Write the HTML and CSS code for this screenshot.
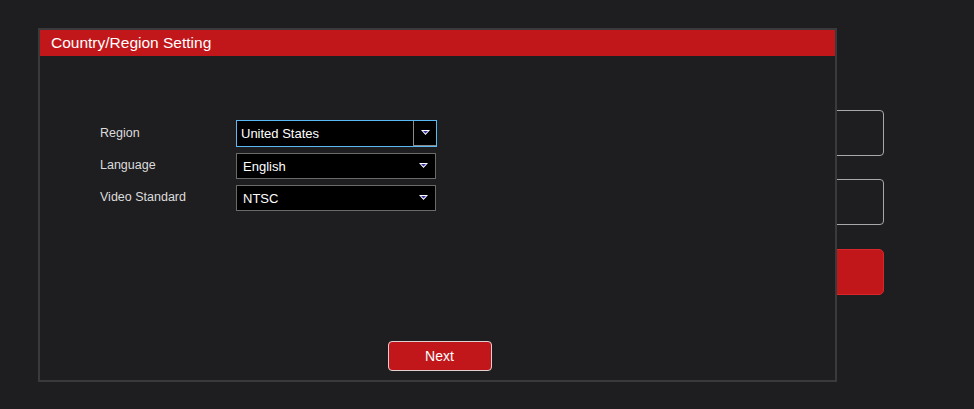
FILE: index.html
```html
<!DOCTYPE html>
<html lang="en">
<head>
    <meta charset="UTF-8">
    <meta name="viewport" content="width=device-width, initial-scale=1.0">
    <title>Country/Region Setting</title>
    <link rel="stylesheet" href="styles.css">
</head>
<body>
    <!-- login form underneath the wizard -->
    <div class="login">
        <div class="login-field"></div>
        <div class="login-field"></div>
        <div class="login-btn"></div>
    </div>

    <div class="dialog">
        <div class="dialog-title">Country/Region Setting</div>
        <div class="dialog-body">
            <div class="form">
                <div class="row">
                    <label>Region</label>
                    <div class="select focused">
                        <span class="value">United States</span>
                        <span class="arrow">
                            <svg width="9" height="6" viewBox="0 0 9 6"><polygon points="0,0 9,0 4.5,5" fill="#fff"/><polygon points="2,1 7,1 4.5,3.4" fill="#3535a8"/></svg>
                        </span>
                    </div>
                </div>
                <div class="row">
                    <label>Language</label>
                    <div class="select">
                        <span class="value">English</span>
                        <span class="arrow">
                            <svg width="9" height="6" viewBox="0 0 9 6"><polygon points="0,0 9,0 4.5,5" fill="#fff"/><polygon points="2,1 7,1 4.5,3.4" fill="#3535a8"/></svg>
                        </span>
                    </div>
                </div>
                <div class="row">
                    <label>Video Standard</label>
                    <div class="select">
                        <span class="value">NTSC</span>
                        <span class="arrow">
                            <svg width="9" height="6" viewBox="0 0 9 6"><polygon points="0,0 9,0 4.5,5" fill="#fff"/><polygon points="2,1 7,1 4.5,3.4" fill="#3535a8"/></svg>
                        </span>
                    </div>
                </div>
            </div>
            <div class="actions">
                <button class="next">Next</button>
            </div>
        </div>
    </div>
</body>
</html>
```

FILE: styles.css
```css
body {
    margin: 0;
    background: #1e1e20;
    font-family: "Liberation Sans", Arial, sans-serif;
    height: 409px;
    overflow: hidden;
}
.login {
    width: 344px;
    margin-left: 540px;
    padding-top: 110px;
    display: flex;
    flex-direction: column;
    gap: 23px;
}
.login-field {
    height: 44px;
    border: 1px solid #a8a8a8;
    border-radius: 4px;
}
.login-btn {
    height: 44px;
    margin-top: 1px;
    background: #c1171b;
    border: 1px solid #d8262a;
    border-radius: 5px;
}
.dialog {
    position: absolute;
    left: 38px;
    top: 28px;
    width: 795px;
    height: 350px;
    border: 2px solid #3a3a3c;
    background: #1e1e20;
    display: flex;
    flex-direction: column;
}
.dialog-title {
    height: 26px;
    line-height: 26px;
    background: #c1171b;
    color: #fff;
    font-size: 15.5px;
    padding-left: 11px;
}
.dialog-body {
    flex: 1;
    display: flex;
    flex-direction: column;
    justify-content: space-between;
    padding: 64px 0 9px 60px;
}
.form {
    display: flex;
    flex-direction: column;
    gap: 6px;
}
.row {
    display: flex;
    align-items: center;
}
.row label {
    width: 136px;
    font-size: 12.5px;
    color: #dcdcdc;
    margin-top: -2px;
}
.select {
    width: 198px;
    height: 24px;
    border: 1px solid #6a6a6a;
    background: #000;
    display: flex;
    align-items: center;
    color: #fff;
    font-size: 13px;
}
.select .value {
    flex: 1;
    padding-left: 6px;
}
.select .arrow {
    width: 23px;
    height: 100%;
    display: flex;
    align-items: center;
    justify-content: center;
}
.select.focused {
    border-color: #5cb8f2;
    height: 25px;
    width: 199px;
}
.select.focused .value {
    padding-left: 4px;
}
.select.focused .arrow {
    box-sizing: border-box;
    border-left: 1px solid #8a8a8a;
    border-bottom: 1px solid #8a8a8a;
}
.actions {
    display: flex;
    justify-content: center;
    padding-right: 56px;
}
.next {
    width: 104px;
    height: 30px;
    background: #c1171b;
    border: 1px solid #e0d0d0;
    border-radius: 4px;
    color: #fff;
    font-family: "Liberation Sans", Arial, sans-serif;
    font-size: 14px;
}
```
